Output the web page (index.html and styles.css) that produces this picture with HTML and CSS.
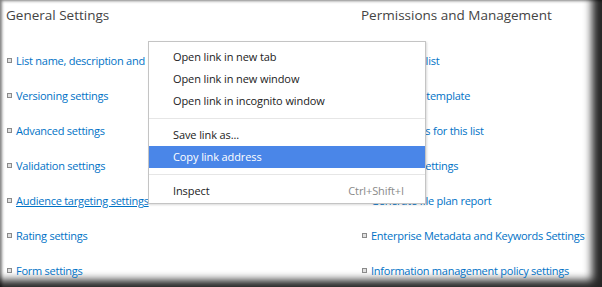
FILE: index.html
```html
<!DOCTYPE html>
<html lang="en">
<head>
    <meta charset="UTF-8">
    <title>List Settings</title>
    <link rel="stylesheet" href="styles.css">
</head>
<body>
    <div class="screen">
        <div class="settings">
            <!-- Left column -->
            <div class="group">
                <h2>General Settings</h2>
                <ul class="links">
                    <li><a href="#">List name, description and navigation</a></li>
                    <li><a href="#">Versioning settings</a></li>
                    <li><a href="#">Advanced settings</a></li>
                    <li><a href="#">Validation settings</a></li>
                    <li><a href="#" class="hover">Audience targeting settings</a></li>
                    <li><a href="#">Rating settings</a></li>
                    <li><a href="#">Form settings</a></li>
                </ul>
            </div>

            <!-- Right column -->
            <div class="group">
                <h2>Permissions and Management</h2>
                <ul class="links">
                    <li><a href="#">Delete this list</a></li>
                    <li><a href="#">Save list as template</a></li>
                    <li><a href="#">Permissions for this list</a></li>
                    <li><a href="#">Workflow settings</a></li>
                    <li><a href="#">Generate file plan report</a></li>
                    <li><a href="#">Enterprise Metadata and Keywords Settings</a></li>
                    <li><a href="#">Information management policy settings</a></li>
                </ul>
            </div>
        </div>

        <!-- Context menu -->
        <div class="context-menu">
            <div class="menu-item">Open link in new tab</div>
            <div class="menu-item">Open link in new window</div>
            <div class="menu-item">Open link in incognito window</div>
            <div class="menu-sep"></div>
            <div class="menu-item">Save link as...</div>
            <div class="menu-item active">Copy link address</div>
            <div class="menu-sep"></div>
            <div class="menu-item">Inspect <span class="shortcut">Ctrl+Shift+I</span></div>
        </div>
    </div>
</body>
</html>
```

FILE: styles.css
```css
/* General styling */
html, body {
    margin: 0;
    padding: 0;
    background-color: #fff;
    overflow: hidden;
}
.screen {
    position: relative;
    width: 602px;
    height: 287px;
    background-color: #fff;
    box-shadow: inset -13px -10px 9px -3px rgba(0, 0, 0, 0.85),
                inset 3px 2px 3px -1px rgba(0, 0, 0, 0.5);
    font-family: "Open Sans", "Noto Sans", sans-serif;
    overflow: hidden;
}

/* Settings columns */
.settings {
    display: grid;
    grid-template-columns: 355px 1fr;
    padding: 5px 0 0 6px;
}
.group h2 {
    margin: 0 0 18px 0;
    font-size: 13.5px;
    font-weight: normal;
    line-height: 20px;
    color: #444;
}
.links {
    list-style: none;
    margin: 0;
    padding: 0 0 0 1px;
}
.links li {
    display: flex;
    align-items: center;
    height: 35px;
    white-space: nowrap;
}
.links li::before {
    content: "";
    width: 3px;
    height: 3px;
    margin-right: 4px;
    border: 1px solid #8a8a8a;
    background-color: #e0e0e0;
}
.links a {
    font-size: 11px;
    letter-spacing: -0.25px;
    color: #0072c6;
    text-decoration: none;
}
.links a.hover {
    text-decoration: underline;
}

/* Context menu */
.context-menu {
    position: absolute;
    left: 148px;
    top: 41px;
    width: 276px;
    padding: 4px 0 1px 0;
    background-color: #fff;
    border: 1px solid #c4c4c4;
    box-shadow: 1px 1px 2px rgba(0, 0, 0, 0.15);
    font-size: 11px;
    letter-spacing: -0.1px;
    color: #222;
}
.menu-item {
    display: flex;
    justify-content: space-between;
    height: 22px;
    line-height: 22px;
    padding: 0 21px 0 24px;
}
.menu-item.active {
    background-color: #4a86e8;
    color: #fff;
}
.menu-sep {
    height: 1px;
    margin: 6px 0 5px 0;
    background-color: #e6e6e6;
}
.shortcut {
    color: #8a8a8a;
}
```
